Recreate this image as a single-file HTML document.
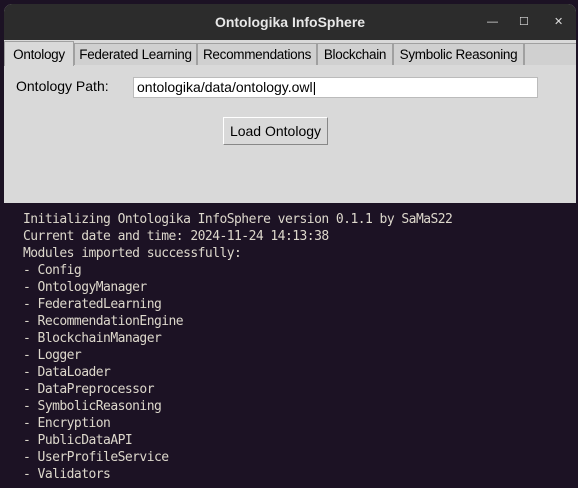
<!DOCTYPE html>
<html><head><meta charset="utf-8"><style>
body{margin:0;width:578px;height:488px;background:#1c1224;position:relative;overflow:hidden;font-family:"Liberation Sans",sans-serif}
.win{position:absolute;left:4px;top:4px;width:572px;height:199px;background:#d9d9d9;border-radius:8px 8px 0 0;overflow:hidden}
.title{position:absolute;left:0;top:0;width:572px;height:36px;background:#2c2c2c;color:#e8e8e8;font-weight:bold;font-size:14px;text-align:center;line-height:36px}
.ctl{position:absolute;top:0;line-height:36px;color:#ddd;font-size:11px}
.tabs{position:absolute;top:36px;left:0;width:572px;height:26px;background:#d9d9d9}
.tab{position:absolute;top:3px;height:22px;border:1px solid #a0a0a0;border-bottom:none;background:#d0d0d0;font-size:13.5px;line-height:22px;text-align:center;color:#000;box-sizing:border-box;white-space:nowrap;overflow:hidden;letter-spacing:-0.3px}
.tab.a{background:#d9d9d9;top:1px;height:25px;line-height:25px}
.lbl{position:absolute;left:12px;top:74px;font-size:14px}
.inp{position:absolute;left:129px;top:73px;background:#fff;border:1px solid #bbb;font-size:14px;line-height:19px;padding-left:3px;box-sizing:border-box;width:405px;height:21px}
.btn{position:absolute;left:219px;top:113px;width:105px;height:28px;border:1px solid;border-color:#fff #888 #888 #fff;box-sizing:border-box;font-size:14px;line-height:26px;text-align:center;background:#d9d9d9}
.term{position:absolute;left:23px;top:211px;color:#ddd8cc;font-family:"DejaVu Sans Mono",monospace;font-size:13px;letter-spacing:-0.55px;line-height:17px;white-space:pre}
</style></head><body>
<div class="win">
<div class="title">Ontologika InfoSphere</div>
<div class="ctl" style="left:483px">—</div>
<div class="ctl" style="left:515px">☐</div>
<div class="ctl" style="left:550px">✕</div>
<div class="tabs">
<div class="tab a" style="left:0;width:70px">Ontology</div>
<div class="tab" style="left:70px;width:123px">Federated Learning</div>
<div class="tab" style="left:193px;width:120px">Recommendations</div>
<div class="tab" style="left:313px;width:76px">Blockchain</div>
<div class="tab" style="left:389px;width:131px">Symbolic Reasoning</div>
<div class="tab" style="left:520px;width:60px"></div>
</div>
<div class="lbl">Ontology Path:</div>
<div class="inp">ontologika/data/ontology.owl|</div>
<div class="btn">Load Ontology</div>
</div>
<div class="term">Initializing Ontologika InfoSphere version 0.1.1 by SaMaS22
Current date and time: 2024-11-24 14:13:38
Modules imported successfully:
- Config
- OntologyManager
- FederatedLearning
- RecommendationEngine
- BlockchainManager
- Logger
- DataLoader
- DataPreprocessor
- SymbolicReasoning
- Encryption
- PublicDataAPI
- UserProfileService
- Validators</div>
</body></html>
